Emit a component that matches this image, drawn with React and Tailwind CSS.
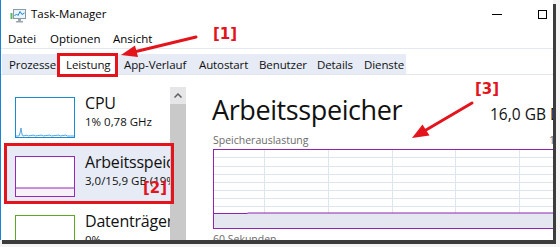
import React from 'react';

const tabs = [
    { label: 'Prozesse', w: 'w-[57px]' },
    { label: 'Leistung', w: 'w-[58px]', active: true },
    { label: 'App-Verlauf', w: 'w-[75px]' },
    { label: 'Autostart', w: 'w-[60px]' },
    { label: 'Benutzer', w: 'w-[58px]' },
    { label: 'Details', w: 'w-[47px]' },
    { label: 'Dienste', w: 'w-[49px]' },
];

const AppIcon = () => (
    <svg width="16" height="14" viewBox="0 0 16 14">
        <rect x="0.5" y="4" width="2" height="6" fill="#5cb85c" />
        <rect x="3.5" y="0.5" width="12" height="9" fill="#eaf4fb" stroke="#8a9aa8" />
        <polyline points="4.5,7 6.5,5 8,6.5 10,2.5 12,5.5 14.5,4" fill="none" stroke="#1e88d2" strokeWidth="1" />
        <rect x="8" y="10" width="3" height="2" fill="#9aa5ae" />
        <rect x="6" y="12" width="7" height="1.5" fill="#9aa5ae" />
    </svg>
);

const CpuGraph = () => (
    <svg width="60" height="41" viewBox="0 0 60 41" className="block">
        <rect x="0.5" y="0.5" width="59" height="40" fill="#fff" stroke="#1b8ad3" />
        <polyline
            points="1,39 4,39 5,36 6,31 7,37 8,39 12,38 13,39 19,38 20,39 27,38 28,39 35,38 36,39 44,38 45,39 51,38 52,39 59,39"
            fill="#e6f2fb"
            stroke="#5aa8df"
            strokeWidth="1"
        />
    </svg>
);

const MemGraph = () => (
    <svg width="60" height="41" viewBox="0 0 60 41" className="block">
        <rect x="0.5" y="0.5" width="59" height="40" fill="#fff" stroke="#9528b4" />
        <rect x="1" y="32" width="58" height="8" fill="#f6f1f8" />
        <line x1="1" y1="32" x2="59" y2="32" stroke="#9528b4" strokeWidth="1" />
    </svg>
);

const DiskGraph = () => (
    <svg width="60" height="41" viewBox="0 0 60 41" className="block">
        <rect x="0.5" y="0.5" width="59" height="40" fill="#fff" stroke="#5aa920" />
    </svg>
);

const SideItem = ({ graph, title, sub, selected }) => (
    <div className={`ml-[3px] h-[59px] flex pl-[11px] pt-[11px] ${selected ? 'bg-[#e6ebf5]' : ''}`}>
        <div className="shrink-0">{graph}</div>
        <div className="ml-[10px] -mt-[4px] whitespace-nowrap">
            <div className="text-[16px] leading-[20px] tracking-[-0.2px] text-[#111]">{title}</div>
            <div className="text-[11.5px] leading-[16px] mt-[1px] text-[#111]">{sub}</div>
        </div>
    </div>
);

const MainChart = () => {
    const rows = [8, 17, 25, 33, 41, 49, 57];
    const cols = [51, 115, 179, 242, 306];
    return (
        <svg width="360" height="80" viewBox="0 0 360 80" className="block">
            <rect x="0" y="0" width="360" height="80" fill="#fff" />
            {rows.map((y) => (
                <line key={y} x1="1" y1={y + 0.5} x2="360" y2={y + 0.5} stroke="#dde5ef" />
            ))}
            {cols.map((x) => (
                <line key={x} x1={x + 0.5} y1="1" x2={x + 0.5} y2="64" stroke="#dde5ef" />
            ))}
            <rect x="1" y="64" width="359" height="15" fill="#e4e7f0" />
            <polyline points="1,64.5 34,64.5 35,64 360,64" fill="none" stroke="#8f24b0" strokeWidth="1" />
            <rect x="0.5" y="0.5" width="370" height="79" fill="none" stroke="#8f24b0" />
        </svg>
    );
};

const App = () => {
    return (
        <div className="w-[560px] h-[247px] bg-[#f4f4f4] relative overflow-hidden font-['Open_Sans',sans-serif] text-black">
            <div className="flex flex-col">
                <div className="flex">
                    <div className="w-[553px] h-[240px] bg-white border-l border-[#1883d7] overflow-hidden flex flex-col">
                        {/* Title bar */}
                        <div className="h-[31px] flex shrink-0">
                            <div className="ml-[9px] mt-[9px]">
                                <AppIcon />
                            </div>
                            <div className="ml-[5px] mt-[6px] text-[11.5px] leading-[16px]">Task-Manager</div>
                            <div className="flex-1" />
                            <div className="mt-[14px] w-[10px] h-[1px] bg-black" />
                            <div className="ml-[36px] mt-[10px] w-[9px] h-[9px] border border-black" />
                            <div className="w-[6px]" />
                        </div>

                        {/* Menu */}
                        <div className="h-[18px] flex items-start text-[11.5px] leading-[16px] border-b border-[#e4e9f1] shrink-0">
                            <div className="ml-[7px] w-[42px]">Datei</div>
                            <div className="w-[63px]">Optionen</div>
                            <div>Ansicht</div>
                        </div>

                        {/* Tabs */}
                        <div className="mt-[5px] h-[21px] border-b border-[#e1e6ee] shrink-0">
                            <div className="ml-[1px] w-[404px] h-[20px] bg-[#e6ebf5] flex text-[11.5px] leading-[16px] tracking-[-0.1px]">
                                {tabs.map((t) => (
                                    <div
                                        key={t.label}
                                        className={`${t.w} pl-[7px] pt-[3px] whitespace-nowrap text-[#111] ${t.active ? 'bg-white' : ''}`}
                                    >
                                        {t.label}
                                    </div>
                                ))}
                            </div>
                        </div>

                        {/* Content */}
                        <div className="flex flex-1 min-h-0">
                            <div className="w-[169px] shrink-0 pt-[11px] overflow-hidden">
                                <SideItem graph={<CpuGraph />} title="CPU" sub="1% 0,78 GHz" />
                                <SideItem graph={<MemGraph />} title="Arbeitsspeicher" sub="3,0/15,9 GB (19%)" selected />
                                <SideItem graph={<DiskGraph />} title="Datenträger 0 (C:)" sub="0%" />
                            </div>

                            <div className="w-[16px] shrink-0 mt-[12px] flex flex-col">
                                <div className="h-[17px] bg-[#e6e6e8] flex items-center justify-center">
                                    <svg width="8" height="5" viewBox="0 0 8 5">
                                        <polyline points="0.5,4.5 4,1 7.5,4.5" fill="none" stroke="#606060" strokeWidth="1.5" />
                                    </svg>
                                </div>
                                <div className="flex-1 bg-[#c9c9c9]" />
                            </div>

                            <div className="flex-1 min-w-0 pl-[26px] pt-[19px] overflow-hidden">
                                <div className="flex items-baseline whitespace-nowrap">
                                    <div className="w-[278px] shrink-0 text-[27px] leading-[32px] tracking-[-0.4px] text-[#111]">Arbeitsspeicher</div>
                                    <div className="text-[15.5px] leading-[20px] text-[#111]">16,0 GB DDR4</div>
                                </div>
                                <div className="mt-[7px] flex whitespace-nowrap text-[10.5px] leading-[14px] text-[#6b6b6b]">
                                    <div className="ml-[1px] w-[336px] shrink-0">Speicherauslastung</div>
                                    <div>16,0 GB</div>
                                </div>
                                <div className="mt-[2px] ml-[1px]">
                                    <MainChart />
                                </div>
                                <div className="ml-[1px] mt-[3px] text-[10.5px] leading-[14px] text-[#6b6b6b]">60 Sekunden</div>
                            </div>
                        </div>
                    </div>
                    <div className="w-[3px] mt-[4px] h-[236px] bg-[#3c3c3c]" />
                </div>
                <div className="ml-[2px] w-[554px] h-[4px] bg-[#3c3c3c]" />
            </div>

            {/* Annotations */}
            <div className="absolute left-[57px] top-[53px] w-[61px] h-[24px] border-[3px] border-[#e3141c]" />
            <div className="absolute left-[4px] top-[143px] w-[170px] h-[61px] border-[3px] border-[#e3141c]" />
            <div className="absolute left-[213px] top-[25px] font-['DejaVu_Sans',sans-serif] font-bold text-[15px] leading-[18px] text-[#e3141c]">[1]</div>
            <div className="absolute left-[143px] top-[179px] font-['DejaVu_Sans',sans-serif] font-bold text-[15px] leading-[18px] text-[#e3141c]">[2]</div>
            <div className="absolute left-[475px] top-[80px] font-['DejaVu_Sans',sans-serif] font-bold text-[15px] leading-[18px] text-[#e3141c]">[3]</div>
            <svg className="absolute left-0 top-0 pointer-events-none" width="560" height="247" viewBox="0 0 560 247">
                <line x1="196" y1="37" x2="136" y2="51.5" stroke="#e3141c" strokeWidth="3" strokeLinecap="round" />
                <polygon points="121,55 135,45.5 138,57" fill="#e3141c" />
                <line x1="472" y1="103" x2="426" y2="130" stroke="#e3141c" strokeWidth="3" strokeLinecap="round" />
                <polygon points="412,138 422.5,124.5 429.5,135.5" fill="#e3141c" />
            </svg>
        </div>
    );
};

export default App;
